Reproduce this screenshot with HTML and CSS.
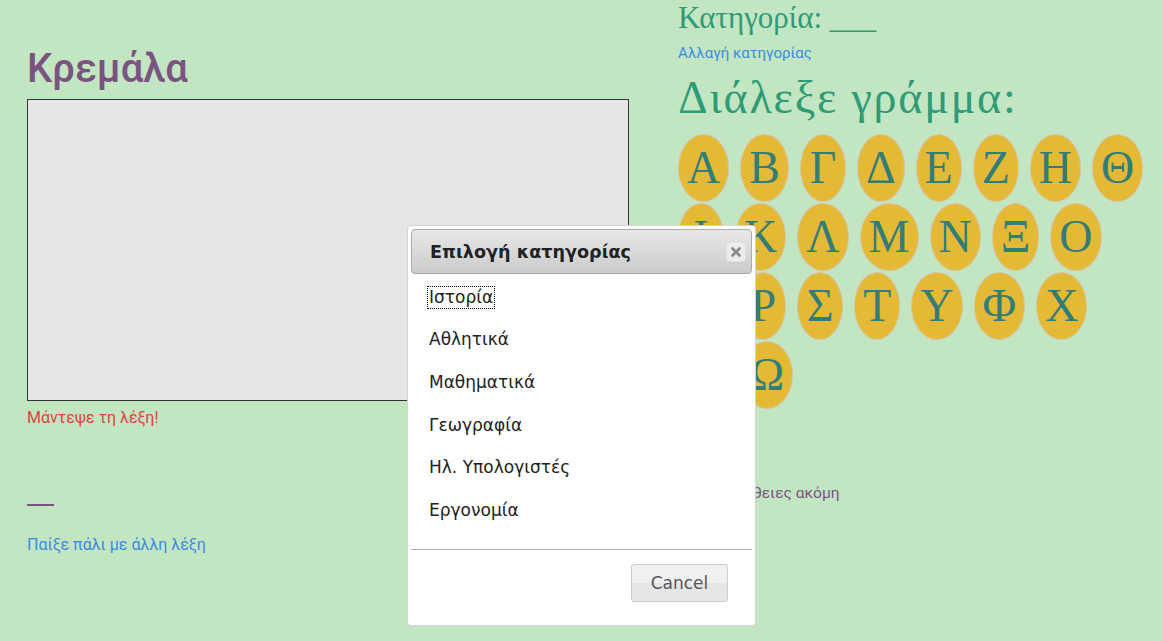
FILE: index.html
```html
<!DOCTYPE html>
<html lang="el">
<head>
<meta charset="utf-8">
<title>Κρεμάλα</title>
<link rel="stylesheet" href="styles.css">
</head>
<body>
<div class="page">
  <div class="left">
    <h1 class="title">Κρεμάλα</h1>
    <div class="canvas"></div>
    <p class="status">Μάντεψε τη λέξη!</p>
    <p class="word"><span class="blank"></span></p>
    <a class="link again" href="#">Παίξε πάλι με άλλη λέξη</a>
  </div>
  <div class="right">
    <h2 class="cat">Κατηγορία: ___</h2>
    <a class="link change" href="#">Αλλαγή κατηγορίας</a>
    <h2 class="pick">Διάλεξε γράμμα:</h2>
    <div class="letters">
      <button class="letter">Α</button>
      <button class="letter">Β</button>
      <button class="letter">Γ</button>
      <button class="letter">Δ</button>
      <button class="letter">Ε</button>
      <button class="letter">Ζ</button>
      <button class="letter">Η</button>
      <button class="letter">Θ</button>
      <button class="letter">Ι</button>
      <button class="letter">Κ</button>
      <button class="letter">Λ</button>
      <button class="letter">Μ</button>
      <button class="letter">Ν</button>
      <button class="letter">Ξ</button>
      <button class="letter">Ο</button>
      <button class="letter">Π</button>
      <button class="letter">Ρ</button>
      <button class="letter">Σ</button>
      <button class="letter">Τ</button>
      <button class="letter">Υ</button>
      <button class="letter">Φ</button>
      <button class="letter">Χ</button>
      <button class="letter">Ψ</button>
      <button class="letter">Ω</button>
    </div>
    <p class="tries">10 προσπάθειες ακόμη</p>
  </div>
</div>

<div class="dialog">
  <div class="titlebar">
    <span class="dtitle">Επιλογή κατηγορίας</span>
    <span class="close">
      <svg width="10" height="10" viewBox="0 0 10 10"><path d="M1.5 1.5 L8.5 8.5 M8.5 1.5 L1.5 8.5" stroke="#888" stroke-width="2.6" stroke-linecap="round"/></svg>
    </span>
  </div>
  <div class="dcontent">
    <div class="item"><span class="opt focused">Ιστορία</span></div>
    <div class="item"><span class="opt">Αθλητικά</span></div>
    <div class="item"><span class="opt">Μαθηματικά</span></div>
    <div class="item"><span class="opt">Γεωγραφία</span></div>
    <div class="item"><span class="opt">Ηλ. Υπολογιστές</span></div>
    <div class="item"><span class="opt">Εργονομία</span></div>
  </div>
  <div class="buttonpane">
    <button class="cancel">Cancel</button>
  </div>
</div>
</body>
</html>
```

FILE: styles.css
```css
html, body {
  margin: 0;
  padding: 0;
}
body {
  background: #c2e6c2;
  font-family: Roboto, "Liberation Sans", sans-serif;
  width: 1163px;
  height: 641px;
  overflow: hidden;
  position: relative;
}
.page {
  display: flex;
  padding-left: 27px;
  gap: 49px;
}
.left {
  width: 602px;
  display: flex;
  flex-direction: column;
  align-items: flex-start;
}
.title {
  margin: 44px 0 5px;
  font-size: 40px;
  line-height: 50px;
  font-weight: 500;
  color: #7b5380;
}
.canvas {
  width: 600px;
  height: 300px;
  background: #e6e6e6;
  border: 1px solid #333;
}
.status {
  margin: 7px 0 0;
  font-size: 16px;
  line-height: 20px;
  color: #e2413c;
}
.word {
  margin: 58px 0 0;
  height: 20px;
  display: flex;
  align-items: flex-end;
}
.blank {
  display: block;
  width: 27px;
  height: 2px;
  background: #7b5380;
}
.link {
  color: #3b8be4;
  text-decoration: none;
  font-size: 15px;
  line-height: 20px;
}
.again {
  margin-top: 29px;
  font-size: 16px;
}
.right {
  width: 468px;
  display: flex;
  flex-direction: column;
  align-items: flex-start;
}
.cat, .pick {
  font-family: "Liberation Serif", serif;
  font-weight: normal;
  color: #2f9b76;
  margin: 0;
}
.cat {
  font-size: 31px;
  line-height: 36px;
}
.change {
  margin-top: 7px;
}
.pick {
  font-size: 46px;
  line-height: 52px;
  letter-spacing: 1.8px;
  margin-top: 9px;
}
.letters {
  display: flex;
  flex-wrap: wrap;
  column-gap: 11px;
  row-gap: 1px;
  margin-top: 10px;
}
.letter {
  font-family: "Liberation Serif", serif;
  font-size: 46px;
  line-height: 52px;
  color: #337d77;
  background: #e4b936;
  border: 1px solid #d9c3a3;
  border-radius: 50%;
  padding: 7px 8px;
  min-width: 46px;
  height: 68px;
  margin: 0;
}
.tries {
  margin: 74px 0 0;
  font-size: 15.5px;
  line-height: 20px;
  color: #7b5380;
}

/* dialog */
.dialog {
  position: absolute;
  left: 407px;
  top: 225px;
  width: 341px;
  padding: 3px;
  background: #fff;
  border: 1px solid #d4d4d4;
  border-radius: 4px;
  font-family: "DejaVu Sans", Verdana, sans-serif;
  color: #222;
}
.titlebar {
  display: flex;
  align-items: center;
  justify-content: space-between;
  height: 43px;
  padding: 0 5px 0 18px;
  background: linear-gradient(#e8e8e8, #cbcbcb);
  border: 1px solid #aaa;
  border-radius: 4px;
}
.dtitle {
  font-weight: bold;
  font-size: 17.6px;
  color: #222;
}
.close {
  width: 20px;
  height: 20px;
  background: #ececec;
  border: 1px solid #e0e0e0;
  border-radius: 3px;
  box-sizing: border-box;
  display: flex;
  align-items: center;
  justify-content: center;
}
.dcontent {
  padding: 2px 17px 17px;
  border-bottom: 1px solid #aaa;
}
.item {
  height: 42.6px;
  display: flex;
  align-items: center;
}
.opt {
  font-size: 17px;
  line-height: 21px;
  padding: 0 1px;
}
.focused {
  outline: 1px dotted #000;
}
.buttonpane {
  display: flex;
  justify-content: flex-end;
  padding: 14px 24px 20px;
}
.cancel {
  font-family: "DejaVu Sans", Verdana, sans-serif;
  font-size: 17px;
  color: #555;
  width: 97px;
  height: 38px;
  background: linear-gradient(#f0f0f0 50%, #e6e6e6 50%);
  border: 1px solid #ccc;
  border-radius: 3px;
}
```
